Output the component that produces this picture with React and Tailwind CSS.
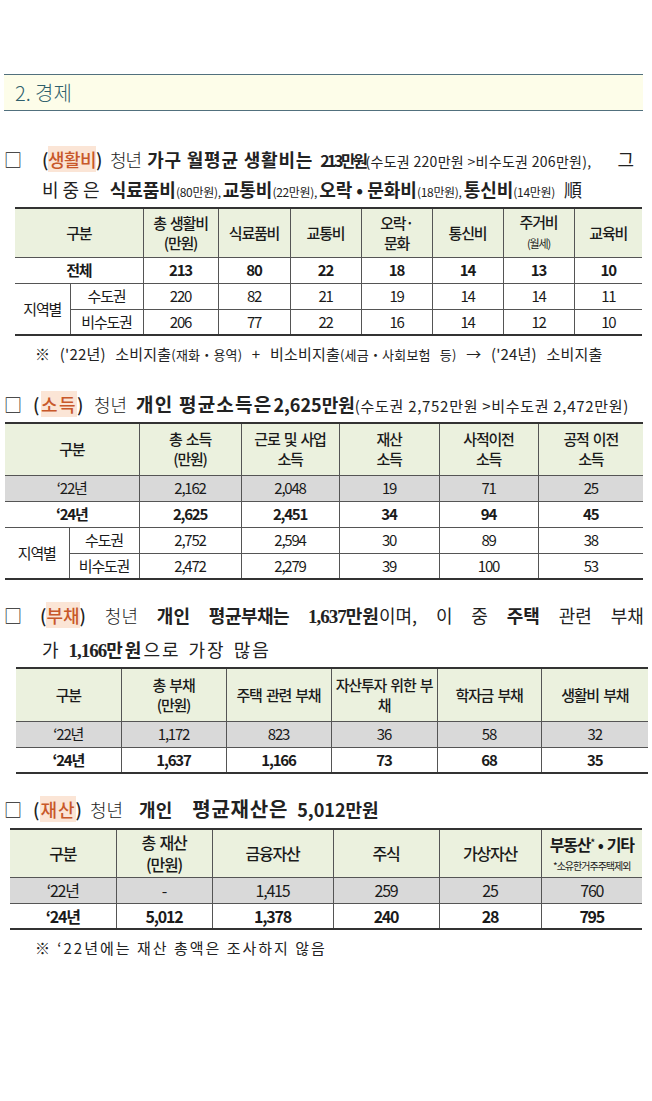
import React from "react";

const font = "font-['Noto_Sans_CJK_KR',sans-serif]";

// shared cell classes
const cell =
  "border border-[#555] text-center align-middle p-0 tracking-[-1.2px] [word-spacing:2px] whitespace-nowrap";
const tableBase =
  "table-fixed border-collapse border-y-2 border-y-[#333] [border-left-style:hidden] [border-right-style:hidden] text-[#1a1a1a]";

const Hl = ({ children }) => (
  <span>
    (<span className="bg-[#fbe5d6] text-[#c8582a]">{children}</span>)
  </span>
);

const Cols = ({ widths }) => (
  <colgroup>
    {widths.map((w, i) => (
      <col key={i} style={{ width: w }} />
    ))}
  </colgroup>
);

const LivingTable = () => {
  const heads = [
    ["총 생활비", "(만원)"],
    ["식료품비"],
    ["교통비"],
    ["오락·", "문화"],
    ["통신비"],
    ["주거비", "(월세)"],
    ["교육비"],
  ];
  const total = ["213", "80", "22", "18", "14", "13", "10"];
  const regions = [
    ["수도권", ["220", "82", "21", "19", "14", "14", "11"]],
    ["비수도권", ["206", "77", "22", "16", "14", "12", "10"]],
  ];
  return (
    <table className={`${tableBase} ml-[15px] w-[627px] text-[15px] leading-[20px]`}>
      <Cols widths={[55, 73, 75, 72, 71, 71, 71, 71, 68]} />
      <thead>
        <tr className="h-[49px] bg-[#ebf1de]">
          <th colSpan={2} className={`${cell} font-medium`}>구분</th>
          {heads.map((h, i) => (
            <th key={i} className={`${cell} font-medium`}>
              {h[0]}
              {h[1] && (
                <>
                  <br />
                  {h[1] === "(월세)" ? <span className="text-[11px] font-normal">{h[1]}</span> : h[1]}
                </>
              )}
            </th>
          ))}
        </tr>
      </thead>
      <tbody>
        <tr className="h-[26px] font-bold">
          <td colSpan={2} className={cell}>전체</td>
          {total.map((v, i) => (
            <td key={i} className={cell}>{v}</td>
          ))}
        </tr>
        {regions.map(([name, vals], r) => (
          <tr key={name} className="h-[26px]">
            {r === 0 && (
              <td rowSpan={2} className={cell}>지역별</td>
            )}
            <td className={cell}>{name}</td>
            {vals.map((v, i) => (
              <td key={i} className={cell}>{v}</td>
            ))}
          </tr>
        ))}
      </tbody>
    </table>
  );
};

const IncomeTable = () => {
  const heads = [
    ["총 소득", "(만원)"],
    ["근로 및 사업", "소득"],
    ["재산", "소득"],
    ["사적이전", "소득"],
    ["공적 이전", "소득"],
  ];
  return (
    <table className={`${tableBase} ml-[5px] w-[638px] text-[15px] leading-[20px]`}>
      <Cols widths={[64, 70, 102, 98, 100, 99, 105]} />
      <thead>
        <tr className="h-[52px] bg-[#ebf1de]">
          <th colSpan={2} className={`${cell} font-medium`}>구분</th>
          {heads.map((h, i) => (
            <th key={i} className={`${cell} font-medium`}>
              {h[0]}
              <br />
              {h[1]}
            </th>
          ))}
        </tr>
      </thead>
      <tbody>
        <tr className="h-[26px] bg-[#d9d9d9]">
          <td colSpan={2} className={cell}>‘22년</td>
          {["2,162", "2,048", "19", "71", "25"].map((v, i) => (
            <td key={i} className={cell}>{v}</td>
          ))}
        </tr>
        <tr className="h-[26px] font-bold">
          <td colSpan={2} className={cell}>‘24년</td>
          {["2,625", "2,451", "34", "94", "45"].map((v, i) => (
            <td key={i} className={cell}>{v}</td>
          ))}
        </tr>
        <tr className="h-[26px]">
          <td rowSpan={2} className={cell}>지역별</td>
          <td className={cell}>수도권</td>
          {["2,752", "2,594", "30", "89", "38"].map((v, i) => (
            <td key={i} className={cell}>{v}</td>
          ))}
        </tr>
        <tr className="h-[26px]">
          <td className={cell}>비수도권</td>
          {["2,472", "2,279", "39", "100", "53"].map((v, i) => (
            <td key={i} className={cell}>{v}</td>
          ))}
        </tr>
      </tbody>
    </table>
  );
};

const YearTable = ({ widths, ml, heads, y22, y24, headH, size }) => (
  <table className={`${tableBase} ${ml} w-[632px] ${size}`}>
    <Cols widths={widths} />
    <thead>
      <tr className={`${headH} bg-[#ebf1de]`}>
        {heads.map((h, i) => (
          <th key={i} className={`${cell} font-medium`}>{h}</th>
        ))}
      </tr>
    </thead>
    <tbody>
      <tr className="h-[26px] bg-[#d9d9d9]">
        {y22.map((v, i) => (
          <td key={i} className={cell}>{v}</td>
        ))}
      </tr>
      <tr className="h-[26px] font-bold">
        {y24.map((v, i) => (
          <td key={i} className={cell}>{v}</td>
        ))}
      </tr>
    </tbody>
  </table>
);

export default function App() {
  return (
    <div className={`${font} relative w-[652px] h-[1101px] overflow-hidden bg-white text-[#222]`}>
      {/* section title */}
      <div className="mt-[74px] ml-[4px] mr-[9px] h-[37px] border-y border-[#51707d] bg-[#fdfde9] pl-[11px] flex items-center">
        <span className="text-[20px] font-light text-[#2f5f6c]">2. 경제</span>
      </div>

      {/* 생활비 */}
      <div className="mt-[33px] ml-[4px] whitespace-nowrap text-[18px] leading-[30px]">
        <div className="flex h-[30px] items-baseline overflow-hidden">
          <span className="w-[38px]">□</span>
          <span className="font-medium tracking-[-0.5px]"><Hl>생활비</Hl></span>
          <span className="ml-[8px] font-light tracking-[-1px]">청년</span>
          <span className="ml-[6px] font-semibold tracking-[0.8px]">가구 월평균 생활비는</span>
          <span className="ml-[7px] font-bold text-[16px] tracking-[-2.5px]">213만원</span>
          <span className="text-[14px] tracking-[0.3px]">(수도권 220만원 &gt;비수도권 206만원),</span>
          <span className="ml-[26px]">그</span>
        </div>
        <div className="flex h-[30px] items-baseline overflow-hidden pl-[38px]">
          <span className="tracking-[4px]">비중은</span>
          <span className="ml-[6px] font-bold">식료품비</span>
          <span className="text-[12px] tracking-[-0.3px]">(80만원),</span>
          <span className="ml-[2px] font-bold">교통비</span>
          <span className="text-[12px] tracking-[-0.3px]">(22만원),</span>
          <span className="ml-[2px] font-bold">오락 • 문화비</span>
          <span className="text-[12px] tracking-[-0.3px]">(18만원),</span>
          <span className="ml-[2px] font-bold">통신비</span>
          <span className="text-[12px] tracking-[-0.3px]">(14만원)</span>
          <span className="ml-[9px]">順</span>
        </div>
      </div>

      <div className="mt-[3px]">
        <LivingTable />
      </div>
      <p className="mt-[6px] ml-[35px] h-[24px] text-[15px] tracking-[0.2px] [word-spacing:6px] leading-[24px] whitespace-nowrap">
        ※ ('22년) 소비지출<span className="text-[13px]">(재화・용역)</span> + 비소비지출
        <span className="text-[13px]">(세금・사회보험 등)</span> → ('24년) 소비지출
      </p>

      {/* 소득 */}
      <div className="mt-[22px] ml-[4px] flex h-[32px] items-baseline overflow-hidden whitespace-nowrap text-[18px] leading-[32px]">
        <span className="w-[29px]">□</span>
        <span className="font-medium tracking-[1.5px]"><Hl>소득</Hl></span>
        <span className="ml-[9px] font-light">청년</span>
        <span className="ml-[9px] font-semibold text-[19px] tracking-[1.2px]">개인 평균소득은</span>
        <span className="ml-[1px] font-bold">2,625만원</span>
        <span className="text-[15px] tracking-[0.7px]">(수도권 2,752만원 &gt;비수도권 2,472만원)</span>
      </div>
      <div className="mt-[2px]">
        <IncomeTable />
      </div>

      {/* 부채 */}
      <div className="mt-[18px] ml-[4px] mr-[8px] whitespace-nowrap text-[18px] leading-[34px]">
        <div className="flex h-[34px] items-baseline justify-between overflow-hidden">
          <span className="font-medium">
            <span className="inline-block w-[36px] font-normal">□</span>
            <Hl>부채</Hl>
          </span>
          <span className="font-light">청년</span>
          <span className="font-semibold">개인</span>
          <span className="font-semibold tracking-[-0.5px]">평균부채는</span>
          <span>
            <span className="font-['Liberation_Serif',serif] font-bold text-[19px] tracking-[-1px]">1,637</span>
            <span className="font-semibold">만원</span>이며,
          </span>
          <span>이</span>
          <span>중</span>
          <span className="font-semibold">주택</span>
          <span>관련</span>
          <span>부채</span>
        </div>
        <div className="flex h-[34px] items-baseline overflow-hidden pl-[38px] tracking-[2px]">
          <span>가</span>
          <span className="ml-[8px] font-['Liberation_Serif',serif] font-bold text-[19px] tracking-[-1px]">1,166</span>
          <span className="font-semibold">만원</span>
          <span>으로</span>
          <span className="ml-[8px]">가장</span>
          <span className="ml-[8px]">많음</span>
        </div>
      </div>
      <div className="mt-[1px]">
        <YearTable
          widths={[105, 105, 105, 106, 104, 107]}
          ml="ml-[16px]"
          headH="h-[53px]"
          size="text-[15px] leading-[20px]"
          heads={[
            "구분",
            <>총 부채<br />(만원)</>,
            "주택 관련 부채",
            <>자산투자 위한 부<br />채</>,
            "학자금 부채",
            "생활비 부채",
          ]}
          y22={["‘22년", "1,172", "823", "36", "58", "32"]}
          y24={["‘24년", "1,637", "1,166", "73", "68", "35"]}
        />
      </div>

      {/* 재산 */}
      <div className="mt-[18px] ml-[4px] flex h-[34px] items-baseline overflow-hidden whitespace-nowrap text-[18px] leading-[34px]">
        <span className="w-[29px]">□</span>
        <span className="font-medium tracking-[1px]"><Hl>재산</Hl></span>
        <span className="ml-[7px] font-light">청년</span>
        <span className="ml-[16px] font-semibold">개인</span>
        <span className="ml-[20px] font-semibold text-[20px] tracking-[0.8px]">평균재산은</span>
        <span className="ml-[9px] font-bold">5,012만원</span>
      </div>
      <div className="mt-[2px]">
        <YearTable
          widths={[106, 96, 121, 106, 102, 101]}
          ml="ml-[10px]"
          headH="h-[48px]"
          size="text-[16px] leading-[22px]"
          heads={[
            "구분",
            <>총 재산<br />(만원)</>,
            "금융자산",
            "주식",
            "가상자산",
            <>
              <span className="font-bold">
                부동산<span className="relative -top-[5px] text-[9px]">*</span>
                <span className="mx-[4px]">•</span>기타
              </span>
              <br />
              <span className="block text-[10px] leading-[14px] tracking-[-1px] font-normal">*소유한거주주택제외</span>
            </>,
          ]}
          y22={["‘22년", "-", "1,415", "259", "25", "760"]}
          y24={["‘24년", "5,012", "1,378", "240", "28", "795"]}
        />
      </div>
      <p className="mt-[6px] ml-[35px] text-[15px] tracking-[2px] leading-[24px] whitespace-nowrap">
        ※ ‘22년에는 재산 총액은 조사하지 않음
      </p>
    </div>
  );
}
